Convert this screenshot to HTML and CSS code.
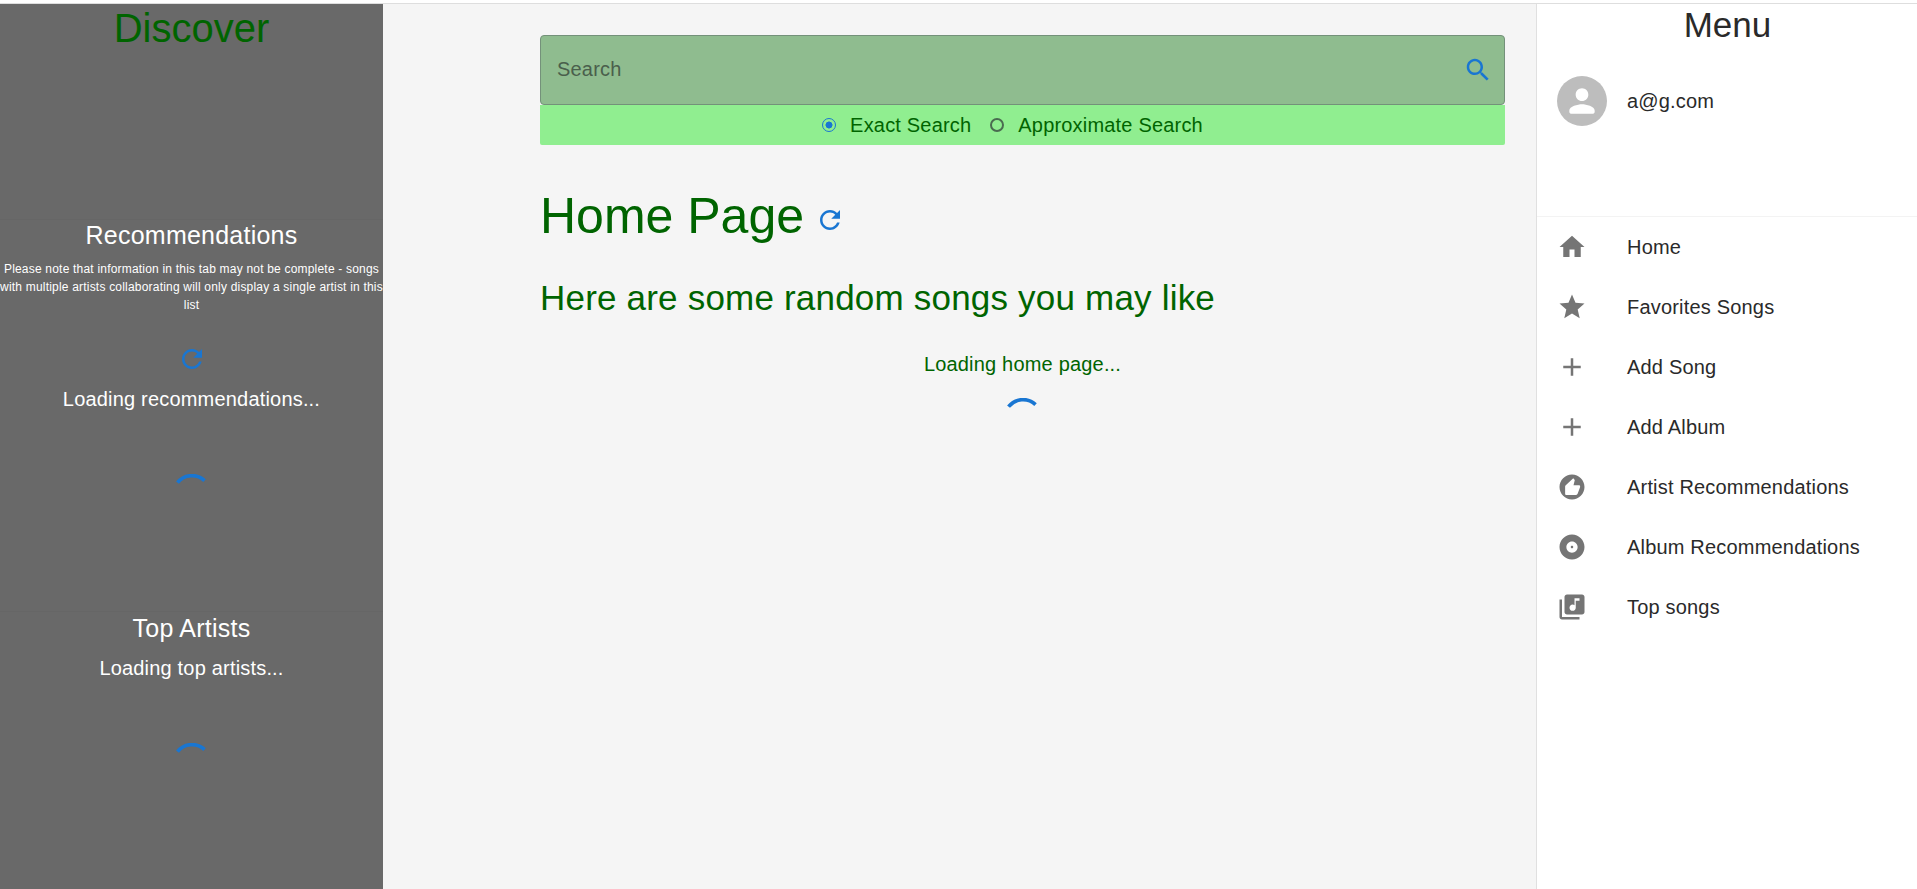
FILE: index.html
```html
<!DOCTYPE html>
<html lang="en">
<head>
    <meta charset="UTF-8">
    <meta name="viewport" content="width=device-width, initial-scale=1.0">
    <title>Home Page</title>
    <link rel="stylesheet" href="styles.css">
</head>
<body>
    <div class="app">
        <aside class="discover">
            <section class="discover-head">
                <h2 class="discover-title">Discover</h2>
            </section>
            <section class="discover-recs">
                <h3 class="panel-title">Recommendations</h3>
                <p class="panel-note">Please note that information in this tab may not be complete - songs with multiple artists collaborating will only display a single artist in this list</p>
                <svg class="icon icon-blue refresh-side" viewBox="0 0 24 24"><path d="M17.65 6.35C16.2 4.9 14.21 4 12 4c-4.42 0-7.99 3.58-7.99 8s3.57 8 7.99 8c3.73 0 6.84-2.55 7.73-6h-2.08c-.82 2.33-3.04 4-5.65 4-3.31 0-6-2.69-6-6s2.69-6 6-6c1.66 0 3.14.69 4.22 1.78L13 11h7V4l-2.35 2.35z"/></svg>
                <p class="loading-text">Loading recommendations...</p>
                <svg class="spinner" viewBox="0 0 44 44"><path d="M6.08 9.56A20.2 20.2 0 0 1 35.78 7.23"/></svg>
            </section>
            <section class="discover-artists">
                <h3 class="panel-title">Top Artists</h3>
                <p class="loading-text">Loading top artists...</p>
                <svg class="spinner" viewBox="0 0 44 44"><path d="M6.08 9.56A20.2 20.2 0 0 1 35.78 7.23"/></svg>
            </section>
        </aside>

        <main class="content">
            <form class="search">
                <div class="search-box">
                    <input class="search-input" type="text" placeholder="Search">
                    <svg class="icon icon-blue" viewBox="0 0 24 24"><path d="M15.5 14h-.79l-.28-.27C15.41 12.59 16 11.11 16 9.5 16 5.91 13.09 3 9.5 3S3 5.91 3 9.5 5.91 16 9.5 16c1.61 0 3.09-.59 4.23-1.57l.27.28v.79l5 4.99L20.49 19l-4.99-5zm-6 0C7.01 14 5 11.99 5 9.5S7.01 5 9.5 5 14 7.01 14 9.5 11.99 14 9.5 14z"/></svg>
                </div>
                <div class="search-options">
                    <label class="option"><input class="radio" type="radio" name="mode" checked>Exact Search</label>
                    <label class="option"><input class="radio" type="radio" name="mode">Approximate Search</label>
                </div>
            </form>

            <div class="page-head">
                <h1 class="page-title">Home Page</h1>
                <svg class="icon icon-blue" viewBox="0 0 24 24"><path d="M17.65 6.35C16.2 4.9 14.21 4 12 4c-4.42 0-7.99 3.58-7.99 8s3.57 8 7.99 8c3.73 0 6.84-2.55 7.73-6h-2.08c-.82 2.33-3.04 4-5.65 4-3.31 0-6-2.69-6-6s2.69-6 6-6c1.66 0 3.14.69 4.22 1.78L13 11h7V4l-2.35 2.35z"/></svg>
            </div>
            <h2 class="page-sub">Here are some random songs you may like</h2>
            <div class="page-loading">
                <p class="loading-home">Loading home page...</p>
                <svg class="spinner" viewBox="0 0 44 44"><path d="M6.08 9.56A20.2 20.2 0 0 1 35.78 7.23"/></svg>
            </div>
        </main>

        <nav class="menu">
            <div class="menu-head">
                <h2 class="menu-title">Menu</h2>
                <div class="user">
                    <div class="avatar">
                        <svg viewBox="0 0 24 24"><path d="M12 12c2.21 0 4-1.79 4-4s-1.79-4-4-4-4 1.79-4 4 1.79 4 4 4zm0 2c-2.67 0-8 1.34-8 4v1c0 .55.45 1 1 1h14c.55 0 1-.45 1-1v-1c0-2.66-5.33-4-8-4z"/></svg>
                    </div>
                    <span class="user-mail">a@g.com</span>
                </div>
            </div>
            <ul class="menu-list">
                <li class="menu-item">
                    <svg class="icon icon-gray" viewBox="0 0 24 24"><path d="M10 20v-6h4v6h5v-8h3L12 3 2 12h3v8z"/></svg>
                    <span>Home</span>
                </li>
                <li class="menu-item">
                    <svg class="icon icon-gray" viewBox="0 0 24 24"><path d="M12 17.27 18.18 21l-1.64-7.03L22 9.24l-7.19-.61L12 2 9.19 8.63 2 9.24l5.46 4.73L5.82 21z"/></svg>
                    <span>Favorites Songs</span>
                </li>
                <li class="menu-item">
                    <svg class="icon icon-gray" viewBox="0 0 24 24"><path d="M19 13h-6v6h-2v-6H5v-2h6V5h2v6h6v2z"/></svg>
                    <span>Add Song</span>
                </li>
                <li class="menu-item">
                    <svg class="icon icon-gray" viewBox="0 0 24 24"><path d="M19 13h-6v6h-2v-6H5v-2h6V5h2v6h6v2z"/></svg>
                    <span>Add Album</span>
                </li>
                <li class="menu-item">
                    <svg class="icon icon-gray" viewBox="0 0 24 24"><path fill-rule="evenodd" d="M12 2C6.48 2 2 6.48 2 12s4.48 10 10 10 10-4.48 10-10S17.52 2 12 2zM18.5 11.8c0 .13-.02.26-.06.39l-1.95 5.3c-.17.5-.64.81-1.15.81H7.5c-.55 0-1-.45-1-1v-5.8c0-.27.11-.52.29-.71L13 5l.9.9c.19.19.3.45.3.71l-1 3.89h4.3c.55 0 1 .45 1 1v.3z"/></svg>
                    <span>Artist Recommendations</span>
                </li>
                <li class="menu-item">
                    <svg class="icon icon-gray" viewBox="0 0 24 24"><path d="M12 2C6.48 2 2 6.48 2 12s4.48 10 10 10 10-4.48 10-10S17.52 2 12 2zm0 14.5c-2.49 0-4.5-2.01-4.5-4.5S9.51 7.5 12 7.5s4.5 2.01 4.5 4.5-2.01 4.5-4.5 4.5zm0-5.5c-.55 0-1 .45-1 1s.45 1 1 1 1-.45 1-1-.45-1-1-1z"/></svg>
                    <span>Album Recommendations</span>
                </li>
                <li class="menu-item">
                    <svg class="icon icon-gray" viewBox="0 0 24 24"><path d="M20 2H8c-1.1 0-2 .9-2 2v12c0 1.1.9 2 2 2h12c1.1 0 2-.9 2-2V4c0-1.1-.9-2-2-2zm-2 5h-3v5.5c0 1.38-1.12 2.5-2.5 2.5S10 13.88 10 12.5s1.12-2.5 2.5-2.5c.57 0 1.08.19 1.5.51V5h4v2zM4 6H2v14c0 1.1.9 2 2 2h14v-2H4V6z"/></svg>
                    <span>Top songs</span>
                </li>
            </ul>
        </nav>
    </div>
</body>
</html>
```

FILE: styles.css
```css
* {
    box-sizing: border-box;
}
body {
    margin: 0;
    height: 100vh;
    overflow: hidden;
    padding-top: 3px;
    background-color: #fff;
    font-family: "Liberation Sans", Arial, sans-serif;
}
h1, h2, h3, p, ul {
    margin: 0;
    padding: 0;
    font-weight: 400;
}
.app {
    display: grid;
    grid-template-columns: 383px 1fr 381px;
    height: 100%;
    border-top: 1px solid #dedede;
}
.icon {
    width: 30px;
    height: 30px;
    flex-shrink: 0;
    display: block;
}
.icon-blue {
    fill: #1976d2;
}
.icon-gray {
    fill: #757575;
}
.spinner {
    display: block;
    width: 40px;
    height: 40px;
    margin: 0 auto;
    fill: none;
    stroke: #1976d2;
    stroke-width: 4;
}

/* left panel */
.discover {
    background-color: #696969;
    color: #fff;
    text-align: center;
    min-height: 0;
}
.discover-title {
    font-size: 40px;
    line-height: 46px;
    padding-top: 1px;
    color: #006400;
}
.discover-head {
    height: 216px;
    border-bottom: 1px solid #666;
}
.discover-recs {
    height: 392px;
    border-bottom: 1px solid #666;
}
.panel-title {
    font-size: 25px;
    line-height: 29px;
    letter-spacing: 0.00938em;
    padding-top: 1px;
}
.panel-note {
    font-size: 12px;
    line-height: 18px;
    letter-spacing: 0.2px;
    margin-top: 10px;
}
.refresh-side {
    margin: 30px auto 0;
}
.loading-text {
    font-size: 20px;
    line-height: 24px;
    letter-spacing: 0.00938em;
}
.discover-recs .loading-text {
    margin-top: 13px;
}
.discover-recs .spinner {
    margin-top: 63px;
}
.discover-artists .panel-title {
    padding-top: 2px;
}
.discover-artists .loading-text {
    margin-top: 13px;
}
.discover-artists .spinner {
    margin-top: 63px;
}

/* main column */
.content {
    background-color: #f5f5f5;
    padding: 31px 31px 0 157px;
}
.search-box {
    display: flex;
    align-items: center;
    height: 70px;
    padding: 0 11px 0 16px;
    background-color: #8fbc8f;
    border: 1px solid #74917a;
    border-radius: 4px;
}
.search-input {
    flex: 1;
    border: 0;
    outline: 0;
    padding: 0 0 2px;
    background: transparent;
    font-family: inherit;
    font-size: 20px;
    letter-spacing: 0.00938em;
    color: #333;
}
.search-input::placeholder {
    color: #4a5f4c;
    opacity: 1;
}
.search-options {
    display: flex;
    justify-content: center;
    align-items: center;
    gap: 19px;
    height: 40px;
    padding-right: 20px;
    background-color: #90ee90;
    border-radius: 0 0 2px 2px;
    font-size: 20px;
    letter-spacing: 0.00938em;
    color: #006400;
}
.option {
    display: flex;
    align-items: center;
    gap: 14px;
}
.radio {
    appearance: none;
    margin: 0;
    width: 14px;
    height: 14px;
    border: 2px solid #4a6b50;
    border-radius: 50%;
    background-color: transparent;
}
.radio:checked {
    border: 1.5px solid #1976d2;
    background: radial-gradient(circle, #1976d2 0 3.2px, transparent 3.8px);
}
.page-head {
    display: flex;
    align-items: center;
    gap: 11px;
    margin-top: 42px;
}
.page-title {
    font-size: 50px;
    line-height: 58px;
    color: #006400;
}
.page-head .icon {
    margin-top: 7px;
}
.page-sub {
    font-size: 35px;
    line-height: 40px;
    letter-spacing: 0.2px;
    margin-top: 33px;
    color: #006400;
}
.page-loading {
    text-align: center;
    margin-top: 34px;
}
.loading-home {
    font-size: 20px;
    line-height: 24px;
    letter-spacing: 0.00938em;
    color: #006400;
}
.page-loading .spinner {
    margin-top: 22px;
}

/* right menu */
.menu {
    background-color: #fff;
    border-left: 1px solid #e0e0e0;
    color: #2a2a2a;
}
.menu-head {
    height: 213px;
    border-bottom: 1px solid #f3f3f3;
    padding: 0 20px;
}
.menu-title {
    font-size: 35px;
    line-height: 40px;
    padding: 1px 0 0 1px;
    text-align: center;
}
.user {
    display: flex;
    align-items: center;
    gap: 20px;
    margin-top: 31px;
}
.avatar {
    width: 50px;
    height: 50px;
    border-radius: 50%;
    background-color: #bdbdbd;
    display: flex;
    align-items: center;
    justify-content: center;
}
.avatar svg {
    width: 38px;
    height: 38px;
    fill: #fff;
}
.user-mail {
    font-size: 20px;
    letter-spacing: 0.00938em;
}
.menu-list {
    list-style: none;
}
.menu-item {
    display: flex;
    align-items: center;
    gap: 40px;
    height: 60px;
    padding-left: 20px;
    font-size: 20px;
    letter-spacing: 0.00938em;
}
```
